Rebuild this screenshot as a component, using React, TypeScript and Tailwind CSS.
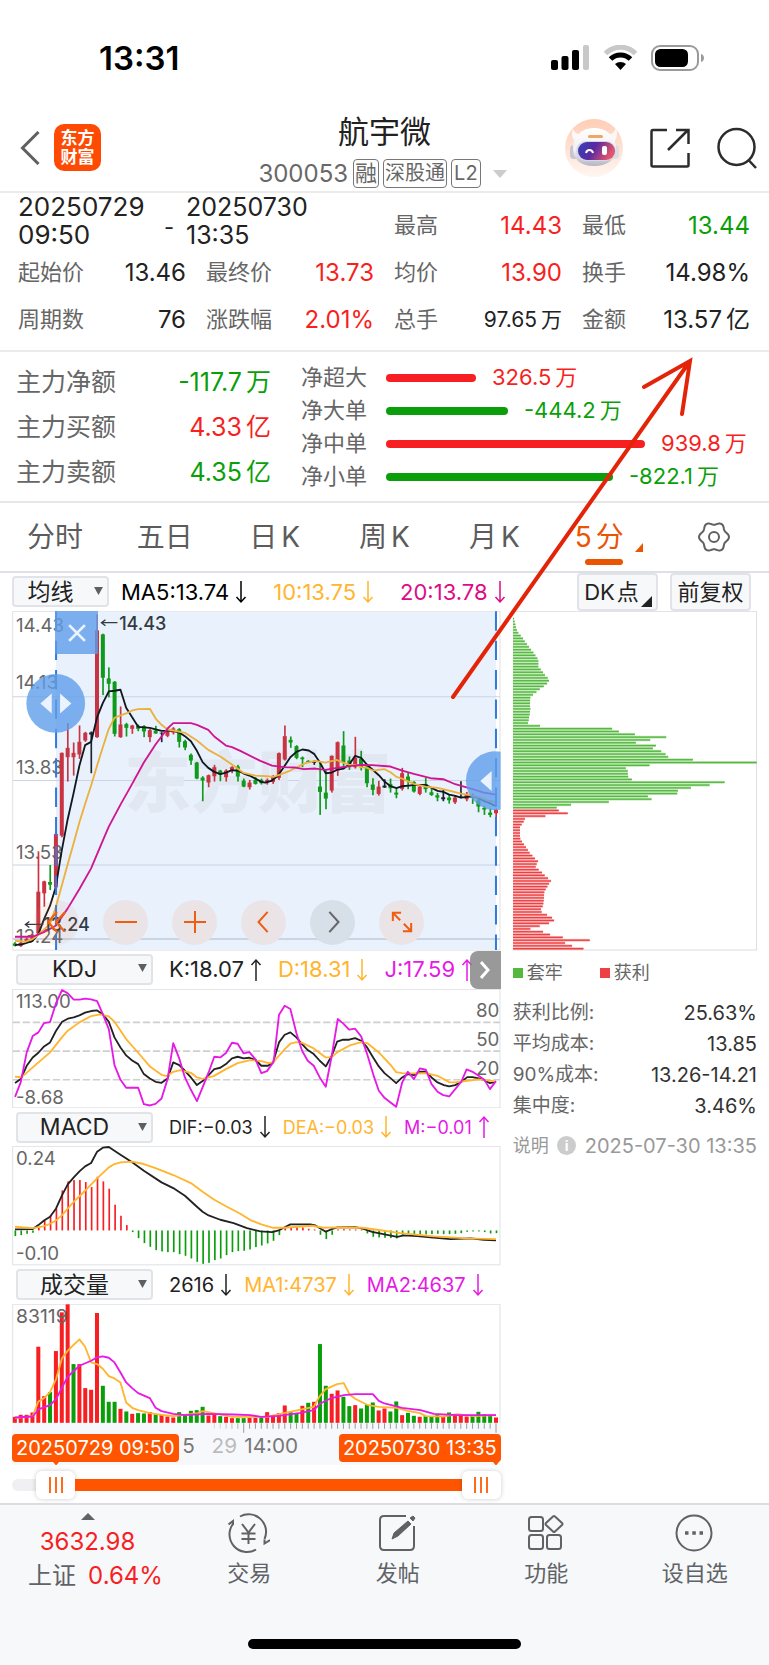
import React, { useState } from 'react';

const UP = '#f71f22';
const DOWN = '#0a9f0a';
const STEP = 17.58;
const xAt = (i: number) => 44.5 + STEP * i;

type Candle = [kind: string, high: number, top: number, bottom: number, low: number];

const candles: Candle[] = [
  ['g', 1114, 1118, 1125, 1127], ['r', 1111, 1116, 1126, 1128], ['r', 1100, 1104, 1112, 1116], ['r', 1090, 1094, 1106, 1110],
  ['r', 842, 963, 1088, 1092], ['r', 930, 932, 968, 1008], ['g', 883, 934, 942, 958], ['r', 788, 790, 950, 955],
  ['r', 546, 547, 795, 800], ['r', 458, 532, 560, 633], ['r', 516, 547, 560, 615], ['r', 465, 514, 552, 565],
  ['r', 484, 487, 510, 514], ['k', 483, 486, 492, 608], ['r', 132, 180, 500, 502], ['g', 190, 192, 322, 374],
  ['g', 291, 324, 340, 381], ['g', 332, 334, 490, 498], ['r', 408, 462, 500, 502], ['g', 457, 461, 472, 498],
  ['r', 463, 465, 475, 490], ['g', 462, 466, 475, 482], ['g', 464, 467, 483, 500], ['r', 475, 479, 500, 515],
  ['g', 466, 480, 489, 490], ['k', 485, 487, 489, 515], ['r', 474, 484, 496, 500], ['r', 470, 474, 486, 492],
  ['g', 473, 476, 514, 531], ['g', 508, 512, 531, 539], ['g', 549, 553, 570, 583], ['g', 574, 576, 624, 626],
  ['g', 617, 621, 630, 692], ['r', 612, 614, 636, 650], ['r', 583, 590, 617, 633], ['g', 598, 600, 612, 632],
  ['r', 596, 600, 620, 633], ['r', 587, 590, 600, 608], ['g', 583, 588, 618, 633], ['g', 624, 630, 648, 650],
  ['r', 628, 636, 650, 657], ['g', 620, 628, 640, 642], ['g', 624, 628, 638, 642], ['r', 624, 628, 636, 642],
  ['r', 614, 620, 634, 640], ['r', 546, 548, 622, 628], ['r', 465, 497, 567, 570], ['g', 498, 508, 516, 532],
  ['g', 524, 527, 562, 566], ['g', 558, 561, 566, 590], ['g', 569, 571, 575, 577], ['k', 570, 573, 577, 583],
  ['g', 574, 648, 664, 733], ['g', 600, 666, 684, 716], ['r', 555, 556, 660, 666], ['r', 513, 515, 600, 616],
  ['g', 482, 525, 575, 590], ['g', 558, 570, 590, 598], ['r', 499, 562, 590, 594], ['g', 541, 565, 590, 600],
  ['g', 580, 588, 638, 650], ['g', 623, 642, 658, 674], ['r', 631, 648, 670, 675], ['k', 626, 645, 651, 652],
  ['g', 624, 640, 653, 666], ['g', 655, 666, 672, 683], ['r', 592, 608, 655, 660], ['g', 606, 618, 632, 656],
  ['g', 632, 634, 663, 666], ['r', 642, 648, 670, 674], ['g', 622, 640, 656, 666], ['g', 655, 665, 673, 676],
  ['g', 667, 674, 681, 692], ['k', 657, 680, 686, 692], ['g', 672, 681, 689, 699], ['r', 676, 681, 695, 700],
  ['k', 632, 678, 682, 683], ['r', 664, 670, 686, 692], ['g', 669, 676, 681, 700], ['g', 680, 690, 708, 725],
  ['g', 706, 712, 717, 733], ['g', 714, 726, 733, 740], ['r', 714, 717, 728, 740],
];

const ma5 =
  '45,1123 68,1120 98,1110 115,1090 132,1045 150,1005 167,950 185,840 203,745 220,670 238,585 255,524 273,514 291,440 308,398 326,363 343,361 361,358 378,412 396,440 414,469 449,472 484,481 519,481 537,486 554,497 572,512 590,541 607,575 624,592 642,604 660,611 677,606 695,599 712,600 730,609 747,615 765,624 783,634 795,636 815,630 833,615 850,590 870,560 888,544 906,537 925,540 941,550 958,575 976,608 994,606 1012,597 1030,594 1048,580 1064,556 1082,562 1100,583 1135,614 1152,633 1170,647 1188,653 1205,647 1225,645 1245,643 1275,643 1293,652 1311,661 1328,664 1346,672 1364,676 1381,681 1400,679 1416,677 1434,683 1452,692 1468,698 1486,707';
const ma10 =
  '45,1110 75,1113 98,1105 115,1092 150,1060 167,1010 185,945 203,880 220,820 238,755 255,700 273,645 291,585 308,530 326,475 343,442 361,435 378,429 396,420 414,416 449,415 467,445 484,463 502,477 519,480 554,487 590,510 624,538 660,558 695,582 730,607 765,615 800,617 820,619 845,610 870,600 888,591 915,578 945,571 975,576 1008,568 1030,577 1048,583 1064,583 1082,590 1100,592 1117,600 1152,596 1170,605 1188,619 1205,624 1240,640 1275,648 1311,652 1346,660 1381,669 1400,672 1434,680 1460,690 1486,694';
const ma20 =
  '45,1098 98,1098 130,1085 167,1065 203,1013 238,955 273,893 308,810 326,768 361,702 396,640 431,576 466,522 502,474 519,458 572,458 590,463 624,478 642,498 677,525 695,530 720,541 780,571 815,585 850,590 885,591 910,596 945,594 975,598 1010,592 1048,587 1080,583 1115,584 1170,588 1205,600 1240,610 1290,623 1328,626 1364,641 1416,656 1450,666 1486,672';

const kLine =
  '45,412 62,400 80,360 98,335 115,321 132,302 150,290 168,255 186,228 203,219 221,215 238,209 255,201 273,196 290,194 308,206 326,228 343,275 361,305 378,329 396,344 414,355 431,385 449,398 466,408 484,411 502,398 519,350 537,358 554,375 572,395 590,418 607,406 625,388 642,370 660,366 677,355 695,338 712,333 730,338 747,336 765,342 783,360 803,360 818,350 836,290 853,267 870,260 888,275 905,295 922,313 940,325 958,345 976,362 994,330 1010,288 1028,282 1046,282 1064,277 1082,285 1100,305 1118,335 1135,362 1152,382 1170,397 1187,412 1205,395 1222,385 1240,388 1258,378 1276,378 1293,395 1311,410 1330,418 1346,422 1364,418 1382,408 1400,394 1416,394 1434,398 1452,404 1468,412 1486,408';
const dLine =
  '45,393 65,394 98,365 150,320 186,274 203,255 238,230 273,211 300,206 326,212 343,228 378,280 414,321 449,362 484,387 500,391 519,378 540,373 572,381 590,395 607,399 640,391 677,370 712,352 750,343 783,346 805,352 818,350 836,330 853,310 870,294 888,289 905,291 940,308 976,335 994,334 1010,320 1046,300 1082,289 1100,292 1135,320 1170,357 1187,379 1205,382 1240,383 1276,382 1311,390 1346,409 1364,410 1400,405 1434,401 1486,407';
const jLine =
  '45,453 62,410 80,320 98,271 115,260 132,232 150,229 168,172 186,133 203,143 221,162 238,162 255,159 273,161 291,166 308,205 326,250 343,358 361,402 378,426 414,426 431,475 449,479 466,474 484,458 502,400 519,292 537,338 554,395 572,432 590,466 607,425 625,380 642,333 660,335 677,322 695,291 712,294 730,323 747,319 765,340 783,382 800,376 820,348 836,207 853,180 870,190 888,262 905,315 922,345 940,360 958,395 976,423 994,330 1012,220 1028,233 1046,252 1064,249 1082,272 1100,325 1118,385 1135,435 1152,456 1170,470 1187,483 1205,410 1222,378 1240,400 1258,368 1276,372 1293,415 1311,438 1328,448 1346,452 1364,430 1382,408 1398,371 1416,378 1434,390 1452,403 1468,430 1486,406';

const macdBars = [
  873, 870, 866, 863, 848, 826, 812, 790, 736, 709, 705, 705, 711, 726, 695, 709, 731, 779, 812, 840, 861, 879, 894, 905, 915, 919, 921, 921,
  927, 932, 940, 950, 956, 953, 945, 940, 930, 921, 918, 917, 913, 906, 901, 895, 887, 870, 849, 848, 846, 847, 851, 853, 869, 882, 869, 853,
  852, 853, 853, 853, 865, 875, 877, 878, 879, 880, 872, 866, 867, 868, 868, 867, 866, 867, 867, 866, 864, 860, 859, 859, 861, 865, 864,
];
const dif =
  '45,853 98,852 115,840 132,826 150,815 168,790 186,750 203,718 221,697 238,679 255,664 273,654 291,620 308,608 326,606 361,629 396,652 431,677 484,712 519,729 554,752 590,785 607,800 625,811 660,824 700,834 740,849 780,859 815,861 835,856 850,848 870,838 930,838 945,841 976,860 994,852 1010,847 1064,846 1085,850 1115,860 1190,875 1210,871 1250,873 1290,877 1350,882 1410,880 1450,884 1486,886';
const dea =
  '45,845 98,849 130,844 150,836 168,826 186,810 221,770 255,737 291,700 326,667 343,657 361,652 396,650 431,657 466,669 519,690 572,714 607,740 642,764 680,785 720,806 750,825 783,838 818,848 850,848 935,842 970,848 1010,847 1085,848 1130,854 1200,864 1300,874 1400,880 1486,882';

const volumes =
  'r438 r432 r432 r425 r228 r376 g364 r241 r125 r101 g280 r280 r352 r357 r127 g345 g393 g393 r414 g422 r429 g427 g428 r424 g431 r432 r437 r440 g424 g434 g420 g418 g408 r434 r430 g436 r438 r442 g442 g442 r441 r441 g440 r424 r436 r427 r404 g424 g428 r405 g396 r393 g220 g345 r369 r359 g378 g406 r403 g413 g402 g395 r419 r413 g422 g392 r433 g426 g435 r438 g436 g438 g430 r437 g425 r430 r434 r437 g434 g423 g430 g432 r440'.split(' ');
const volMa1 =
  '45,442 98,436 115,392 132,382 150,364 168,325 186,262 203,240 221,222 238,206 255,228 273,275 291,280 308,294 326,316 343,323 361,335 378,395 396,411 414,418 449,427 484,432 519,436 590,428 607,421 640,427 695,438 750,438 800,438 850,427 940,408 958,376 976,355 1010,340 1030,337 1048,372 1064,384 1100,402 1135,408 1187,411 1222,420 1258,427 1276,436 1328,437 1370,430 1420,436 1486,433';
const volMa2 =
  '45,440 98,437 115,416 150,403 168,385 186,350 203,318 238,285 273,270 291,260 308,257 326,261 343,275 361,305 378,335 396,352 414,367 449,382 466,411 484,421 519,429 554,433 620,429 700,431 750,433 783,438 835,435 900,426 940,418 960,398 990,383 1030,373 1065,370 1117,370 1135,390 1152,398 1205,411 1260,418 1300,429 1370,433 1486,433';

// right edge of every chip bar, top to bottom
const chips = [
  39, 41, 43, 45, 48, 52, 59, 66, 71, 78, 84, 90, 97, 103, 109, 112, 112, 112, 119, 126, 132, 140, 144, 138, 128, 116, 106, 96, 88, 87, 87, 87,
  88, 87, 86, 84, 83, 81, 117, 333, 353, 401, 495, 447, 404, 464, 455, 480, 493, 501, 575, 766, 445, 374, 380, 380, 381, 392, 670, 625, 569,
  530, 528, 440, 451, 323, 210, 167, 173, 200, 133, 72, 68, 62, 57, 57, 57, 57, 58, 63, 69, 75, 81, 86, 94, 102, 111, 107, 104, 113, 123, 131,
  141, 150, 144, 139, 134, 130, 129, 129, 128, 127, 125, 120, 122, 138, 153, 159, 144, 116, 88, 126, 147, 185, 266, 192, 213, 247,
];
const GREEN_CHIPS = 68;

// six soft lobes, one pointing right
const gear = Array.from({ length: 72 }, (_, i) => {
  const a = (i / 72) * Math.PI * 2;
  const r = 13.6 + 1.4 * Math.cos(6 * a);
  return `${(16 + r * Math.cos(a)).toFixed(2)},${(16 + r * Math.sin(a)).toFixed(2)}`;
}).join(' ');

const Line: React.FC<{ points: string; color: string }> = ({ points, color }) => (
  <polyline points={points} fill="none" stroke={color} strokeWidth="5.5" strokeLinejoin="round" />
);

const Arrow: React.FC<{ up?: boolean }> = ({ up }) => (
  <svg viewBox="0 0 12 24" className="ml-1.5 h-6 w-3 shrink-0" fill="none" stroke="currentColor" strokeWidth="1.5">
    {up ? <path d="M6 23V2M1.500 7L6 2l4.500 5" /> : <path d="M6 1v21M1.500 17L6 22l4.500-5" />}
  </svg>
);

const Reading: React.FC<{ text: string; color: string; up?: boolean }> = ({ text, color, up }) => (
  <span className={`flex items-center whitespace-nowrap ${color}`}>
    {text}
    <Arrow up={up} />
  </span>
);

const Picker: React.FC<{ label: string; options: string[]; size: string }> = ({ label, options, size }) => (
  <div className={`relative shrink-0 ${size}`}>
    <select
      aria-label={label}
      className="h-[31px] w-full appearance-none rounded border-2 border-[#e1e3e8] bg-[#f7f8fa] pr-5 text-center [text-align-last:center] text-[23px] leading-6 text-[#222]"
    >
      {options.map((o) => (
        <option key={o}>{o}</option>
      ))}
    </select>
    <svg viewBox="0 0 10 9" className="pointer-events-none absolute right-1.5 top-[11px] h-2 w-[9px]">
      <path d="M0 0h10L5 9z" fill="#5f5f5f" />
    </svg>
  </div>
);

// "97.65万" is set with a little air before the unit
const Amount: React.FC<{ value: string }> = ({ value }) => {
  const unit = value.slice(-1);
  if (unit !== '万' && unit !== '亿') return <>{value}</>;
  return (
    <>
      {value.slice(0, -1)}
      <span className="ml-1">{unit}</span>
    </>
  );
};

function StatusBar() {
  return (
    <div className="flex h-[115px] items-center justify-between pl-[99px] pr-16">
      <span className="text-[33px] font-semibold leading-10 text-black">13:31</span>
      <svg viewBox="0 0 154 26" className="h-[26px] w-[154px]">
        <g>
          <rect x="0" y="15" width="7" height="10" rx="2" />
          <rect x="10.500" y="11" width="7" height="14" rx="2" />
          <rect x="21" y="5" width="7" height="20" rx="2" />
          <rect x="32" y="0" width="6" height="25" rx="2" fill="#c8c8c8" />
        </g>
        <g fill="none">
          <path d="M54.500 8.500C63 0 76 0 84.500 8.500" stroke="#c8c8c8" strokeWidth="5" />
          <path d="M59.500 14C65 8.500 74 8.500 79.500 14" stroke="#000" strokeWidth="5" />
        </g>
        <path d="M64 19c3-2.800 8-2.800 11 0l-5.500 6z" />
        <rect x="101" y="1" width="46" height="24" rx="8" fill="none" stroke="#9b9b9b" strokeWidth="2" />
        <rect x="104" y="4" width="33" height="18" rx="5.500" />
        <path d="M150 9c4 1 4 7 0 8z" fill="#9b9b9b" />
      </svg>
    </div>
  );
}

function Header() {
  return (
    <header className="grid h-[78px] grid-cols-[1fr_250px_1fr] items-start border-b-2 border-[#ebebeb] px-3">
      <div className="flex items-center pl-2 pt-[9px]">
        <button aria-label="返回" className="mr-3.5">
          <svg viewBox="0 0 20 34" className="h-[34px] w-5" fill="none" stroke="#606060" strokeWidth="3">
            <path d="M18.500 1L2.500 17l16 16" />
          </svg>
        </button>
        <a href="#home" className="flex size-[47px] flex-col items-center justify-center rounded-[10px] bg-[#ff4a03] text-[17px] font-bold leading-[19px] text-white">
          <span>东方</span>
          <span>财富</span>
        </a>
      </div>
      <div className="flex flex-col items-center whitespace-nowrap pt-px">
        <h1 className="text-[31px] leading-8 text-[#222]">航宇微</h1>
        <div className="mt-[11px] flex items-center gap-1 pr-1 text-[22px] leading-6 text-[#686868]">
          <span className="mr-px text-[24px]">300053</span>
          <span className="rounded border border-[#777] px-px leading-[27px]">融</span>
          <span className="rounded border border-[#777] px-px text-[20px] leading-[27px]">深股通</span>
          <span className="rounded border border-[#777] px-0.5 text-[20px] leading-[27px]">L2</span>
          <svg viewBox="0 0 14 8" className="ml-2 h-2 w-3.5">
            <path d="M0 0h14L7 8z" fill="#ccc" />
          </svg>
        </div>
      </div>
      <div className="flex items-center justify-end gap-[27px] pt-1">
        <button aria-label="智能助手">
          <svg viewBox="0 0 58 58" className="size-[58px]">
            <defs>
              <linearGradient id="halo" x1="0" y1="0" x2="0" y2="1">
                <stop offset="0" stopColor="#ffcdb5" />
                <stop offset="1" stopColor="#fff6f1" />
              </linearGradient>
              <linearGradient id="visor" x1="0" y1="0" x2="1" y2="0.3">
                <stop offset="0" stopColor="#3043b8" />
                <stop offset="0.5" stopColor="#5b2aa0" />
                <stop offset="1" stopColor="#e2556f" />
              </linearGradient>
              <linearGradient id="shell" x1="0" y1="0" x2="0" y2="1">
                <stop offset="0" stopColor="#ffffff" />
                <stop offset="0.6" stopColor="#f0eef3" />
                <stop offset="1" stopColor="#b4b5c4" />
              </linearGradient>
            </defs>
            <circle cx="29" cy="29" r="29" fill="url(#halo)" />
            <path d="M8 10c-2 5-1 10 3 13l7-7c-5 0-8-2-10-6zM51 9c2 5 1 10-2 14l-8-7c5 0 8-2 10-7z" fill="#fbf8f9" />
            <rect x="5" y="26" width="9" height="14" rx="4" fill="#c6c5d0" />
            <rect x="46" y="26" width="8" height="14" rx="4" fill="#dcdce3" />
            <path d="M29 9c13 0 22 9 22 21 0 10-8 17-22 17S8 40 8 30C8 18 16 9 29 9z" fill="url(#shell)" />
            <rect x="23" y="16" width="15" height="3" rx="1.500" fill="#f0a565" />
            <rect x="11" y="22" width="40" height="20" rx="10" fill="#d9d6e4" />
            <rect x="13" y="23" width="37" height="18" rx="9" fill="url(#visor)" />
            <path d="M21 34c1-4 6-4 7 0" fill="none" stroke="#fff" strokeWidth="2" />
            <rect x="37" y="27" width="5" height="9" rx="2" fill="#fff" />
          </svg>
        </button>
        <button aria-label="分享">
          <svg viewBox="0 0 40 40" className="size-10" fill="none" stroke="#2c2c2c" strokeWidth="2.500">
            <path d="M17 2H3Q1.500 2 1.500 4v33q0 1.500 1.500 1.500h34q1.500 0 1.500-1.500V25M18 22L38 2M26 2h12.500v14" />
          </svg>
        </button>
        <button aria-label="搜索">
          <svg viewBox="0 0 40 42" className="h-[42px] w-10" fill="none" stroke="#2c2c2c" strokeWidth="2.500">
            <circle cx="19.500" cy="20" r="18" />
            <path d="M31.500 33l7.500 8" />
          </svg>
        </button>
      </div>
    </header>
  );
}

const Stat: React.FC<{ label: string; value: string; color?: string; small?: boolean }> = ({ label, value, color = 'text-[#222]', small }) => (
  <div className="flex h-[47px] items-center justify-between whitespace-nowrap">
    <span className="text-[22px] text-[#666]">{label}</span>
    <span className={`${small ? 'text-[21px]' : 'text-[24px]'} ${color}`}>
      <Amount value={value} />
    </span>
  </div>
);

function Summary() {
  return (
    <section className="grid grid-cols-4 gap-x-5 border-b-2 border-[#ebebeb] pb-[7px] pl-[18px] pr-[19px] pt-[9px]">
      <div className="col-span-2 flex h-[47px] items-end text-[#222]">
        <span className="w-[146px] text-[26px] leading-7">20250729 09:50</span>
        <span className="mb-2 w-[22px] text-[22px] leading-7">-</span>
        <span className="w-[140px] text-[25px] leading-7">20250730 13:35</span>
      </div>
      <Stat label="最高" value="14.43" color="text-[#f71f22]" />
      <Stat label="最低" value="13.44" color="text-[#0a9f0a]" />
      <Stat label="起始价" value="13.46" />
      <Stat label="最终价" value="13.73" color="text-[#f71f22]" />
      <Stat label="均价" value="13.90" color="text-[#f71f22]" />
      <Stat label="换手" value="14.98%" />
      <Stat label="周期数" value="76" />
      <Stat label="涨跌幅" value="2.01%" color="text-[#f71f22]" />
      <Stat label="总手" value="97.65万" small />
      <Stat label="金额" value="13.57亿" />
    </section>
  );
}

const flows = [
  { label: '净超大', value: '326.5万', width: 90, up: true },
  { label: '净大单', value: '-444.2万', width: 122, up: false },
  { label: '净中单', value: '939.8万', width: 259, up: true },
  { label: '净小单', value: '-822.1万', width: 227, up: false },
];

function MoneyFlow() {
  const totals = [
    { label: '主力净额', value: '-117.7万', color: 'text-[#0a9f0a]' },
    { label: '主力买额', value: '4.33亿', color: 'text-[#f71f22]' },
    { label: '主力卖额', value: '4.35亿', color: 'text-[#0a9f0a]' },
  ];
  return (
    <section className="flex border-b-2 border-[#e6e6e6] pb-1.5 pl-4 pt-2">
      <div className="w-[255px]">
        {totals.map((t) => (
          <div key={t.label} className="flex h-[45px] items-center justify-between text-[25px]">
            <span className="text-[#666]">{t.label}</span>
            <span className={t.color}>
              <Amount value={t.value} />
            </span>
          </div>
        ))}
      </div>
      <div className="flex-1 pl-[30px] pt-px">
        {flows.map((f) => (
          <div key={f.label} className="flex h-[33px] items-center whitespace-nowrap text-[22px]">
            <span className="w-[85px] text-[#666]">{f.label}</span>
            <span className={`h-2 rounded ${f.up ? 'bg-[#f71f22]' : 'bg-[#0a9f0a]'}`} style={{ width: f.width }} />
            <span className={`ml-4 ${f.up ? 'text-[#f71f22]' : 'text-[#0a9f0a]'}`}>
              <Amount value={f.value} />
            </span>
          </div>
        ))}
      </div>
    </section>
  );
}

const periods = [
  ['分', '时'],
  ['五', '日'],
  ['日', 'K'],
  ['周', 'K'],
  ['月', 'K'],
  ['5', '分'],
];

function Tabs() {
  const [active, setActive] = useState('5分');
  return (
    <nav className="flex h-[70px] border-b-2 border-[#dfe0e6]">
      {periods.map(([head, tail]) => {
        const name = head + tail;
        const mixed = tail === 'K' || head === '5';
        return (
          <button
            key={name}
            onClick={() => setActive(name)}
            className={`relative flex flex-1 items-center justify-center text-[28px] ${active === name ? 'text-[#ea5504]' : 'text-[#5c5c5c]'}`}
          >
            <span className={name === '5分' ? 'mr-2.5' : ''}>
              {head}
              <span className={mixed ? 'ml-1' : ''}>{tail}</span>
            </span>
            {name === '5分' && (
              <svg viewBox="0 0 8 9" className="absolute right-4 top-10 h-[9px] w-2">
                <path d="M8 0v9H0z" fill="#ea5504" />
              </svg>
            )}
            {active === name && <span className="absolute bottom-1.5 left-9 h-1.5 w-[38px] rounded-full bg-[#ea5504]" />}
          </button>
        );
      })}
      <button aria-label="设置" className="flex flex-1 items-center justify-center">
        <svg viewBox="0 0 32 32" className="size-8" fill="none" stroke="#606060" strokeWidth="2">
          <polygon points={gear} strokeLinejoin="round" />
          <circle cx="16" cy="16" r="5" />
        </svg>
      </button>
    </nav>
  );
}

const candleColor: Record<string, string> = { r: '#c93442', g: '#109a1c', k: '#1c2630' };

function PriceChart() {
  return (
    <div className="relative">
      <svg viewBox="36 122 1464 1018" className="block w-full">
        <rect x="38" y="123" width="1460" height="1015" fill="#fff" stroke="#dfe1e7" strokeWidth="3" />
        <rect x="168" y="124" width="1318" height="1013" fill="#e9f1fc" />
        {[379, 630, 883, 1105].map((y) => (
          <path key={y} d={`M38 ${y}H1498`} stroke="#cad4e4" strokeWidth={y > 1000 ? 6 : 3} />
        ))}
        <text x="372" y="708" fontSize="200" fontWeight="900" fill="#e1e8f2">东方财富</text>
        <g fontSize="56" fill="#666">
          <text x="48" y="185">14.43</text>
          <text x="48" y="357">14.13</text>
          <text x="48" y="611">13.83</text>
          <text x="48" y="865">13.53</text>
          <text x="48" y="1118">13.24</text>
        </g>
        {candles.map(([kind, high, top, bottom, low], i) => (
          <g key={i} fill={candleColor[kind]}>
            <rect x={xAt(i) - 2} y={high} width="5" height={low - high} />
            <rect x={xAt(i) - 6} y={top} width="12" height={bottom - top} />
          </g>
        ))}
        <Line points={ma5} color="#111820" />
        <Line points={ma10} color="#ecb03c" />
        <Line points={ma20} color="#cf1591" />
        <g fontSize="54" fill="#333a44" fontWeight="500">
          <text x="357" y="178">14.43</text>
          <text x="130" y="1081">13.24</text>
        </g>
        <g fill="none" stroke="#333a44" strokeWidth="4">
          <path d="M352 157H304M316 148l-12 9 12 9" />
          <path d="M130 1061H76M88 1052l-12 9 12 9" />
        </g>
        <path d="M168 123V1138M1486 123V1138" stroke="#2f7bdf" strokeWidth="6" strokeDasharray="58 30" />
        <g fill="#5f9dea" fillOpacity="0.8">
          <circle cx="167" cy="399" r="88" />
          <path d="M1500 544a88 88 0 1 0 0 173z" />
        </g>
        <path d="M155 369v60l-34-30zM180 369v60l34-30zM1473 601v60l-34-30z" fill="#eaf3ff" />
      </svg>
      <button aria-label="关闭区间统计" className="absolute left-[43px] top-0 flex size-[43px] items-center justify-center bg-[#5f9dea]/80">
        <svg viewBox="0 0 16 16" className="size-[18px]" stroke="#eaf3ff" strokeWidth="2.500">
          <path d="M1 1l14 14M15 1L1 15" />
        </svg>
      </button>
      <div className="absolute bottom-1.5 left-[22px] flex gap-6">
        <button aria-label="最早" className="flex size-[45px] items-center justify-center rounded-full bg-[#f08a5a]/10">
          <svg viewBox="0 0 20 20" className="size-5" fill="none" stroke="#f0600f" strokeWidth="2.200">
            <path d="M10 0L1 10l9 10M18 0L9 10l9 10" />
          </svg>
        </button>
        {[
          { name: '缩小', path: 'M0 12h24' },
          { name: '放大', path: 'M0 12h24M12 0v24' },
          { name: '左移', path: 'M16 1L6 12l10 11' },
          { name: '右移', path: 'M8 1l10 11L8 23' },
          { name: '全屏', path: 'M2 11V2h9M2 2l8 8M13 22h9v-9M22 22l-8-8' },
        ].map((b) => (
          <button
            key={b.name}
            aria-label={b.name}
            className={`flex size-[45px] items-center justify-center rounded-full ${b.name === '右移' ? 'bg-[#d7dfe8]' : 'bg-[#eae4e6]'}`}
          >
            <svg viewBox="0 0 24 24" className="size-[22px]" fill="none" stroke={b.name === '右移' ? '#666' : '#ee5d12'} strokeWidth="2.200">
              <path d={b.path} />
            </svg>
          </button>
        ))}
      </div>
    </div>
  );
}

function KdjChart() {
  return (
    <svg viewBox="36 130 1464 358" className="block w-full">
      <rect x="38" y="131" width="1460" height="355" fill="#fff" stroke="#dfe1e7" strokeWidth="3" />
      <path d="M38 230H1498M38 316H1498M38 402H1498" stroke="#cfcfcf" strokeWidth="5" strokeDasharray="22 8" />
      <g fontSize="56" fill="#666">
        <text x="48" y="188">113.00</text>
        <text x="48" y="474">-8.68</text>
        <text x="1496" y="215" textAnchor="end">80</text>
        <text x="1496" y="302" textAnchor="end">50</text>
        <text x="1496" y="388" textAnchor="end">20</text>
      </g>
      <Line points={kLine} color="#222" />
      <Line points={dLine} color="#ffb52e" />
      <Line points={jLine} color="#e619e6" />
    </svg>
  );
}

function MacdChart() {
  return (
    <svg viewBox="36 603 1464 358" className="block w-full">
      <rect x="38" y="604" width="1460" height="355" fill="#fff" stroke="#dfe1e7" strokeWidth="3" />
      <g fontSize="56" fill="#666">
        <text x="48" y="659">0.24</text>
        <text x="48" y="945">-0.10</text>
      </g>
      {macdBars.map((y, i) => (
        <rect key={i} x={xAt(i) - 1} y={Math.min(y, 856)} width="5" height={Math.abs(856 - y)} fill={y < 856 ? UP : DOWN} />
      ))}
      <Line points={dif} color="#222" />
      <Line points={dea} color="#ffb52e" />
    </svg>
  );
}

function VolumeChart() {
  return (
    <div className="relative">
      <svg viewBox="36 100 1464 484" className="block w-full">
        <rect x="36" y="456" width="1464" height="128" fill="#f7f8fb" />
        <path d="M38 456V101H1498V456" fill="#fff" stroke="#dfe1e7" strokeWidth="3" />
        {volumes.map((v, i) => {
          const y = Number(v.slice(1));
          return <rect key={i} x={xAt(i) - 6} y={y} width="12" height={456 - y} fill={v[0] === 'r' ? UP : DOWN} />;
        })}
        <text x="48" y="157" fontSize="58" fill="#666">83119</text>
        <Line points={volMa1} color="#ffb52e" />
        <Line points={volMa2} color="#e619e6" />
        {volumes.map((_, i) =>
          i < 34 ? null : (
            <path
              key={i}
              d={`M${xAt(i)} 457v${i === 39 || i === 82 ? 29 : 17}`}
              stroke="#999"
              strokeWidth="3"
              opacity={i < 39 ? 0.3 + (i - 34) * 0.1 : 1}
            />
          )
        )}
        <g fontSize="62" fill="#777">
          <text x="546" y="547">5</text>
          <text x="634" y="547" fill="#bbb">29</text>
          <text x="732" y="547">14:00</text>
        </g>
        <path d="M155 568h26l-13 16zM1473 568h26l-13 16z" fill="#ff5500" />
      </svg>
      <span className="absolute bottom-[3px] left-0 rounded bg-[#ff5500] px-1 text-[20px] leading-7 text-white">20250729 09:50</span>
      <span className="absolute bottom-[3px] right-0 rounded bg-[#ff5500] px-1 text-[20px] leading-7 text-white">20250730 13:35</span>
    </div>
  );
}

const Grip = () => (
  <span className="flex h-7 w-[39px] items-center justify-center gap-1 rounded-md bg-white shadow-[0_0_5px_rgba(0,0,0,0.2)]">
    <i className="h-4 w-0.5 bg-[#ff6a1f]" />
    <i className="h-4 w-0.5 bg-[#ff6a1f]" />
    <i className="h-4 w-0.5 bg-[#ff6a1f]" />
  </span>
);

function RangeBar() {
  return (
    <div className="relative mb-1 mt-1.5 flex h-7 items-center">
      <span className="h-3 w-6 rounded-l-full bg-[#f0f0f2]" />
      <Grip />
      <span className="h-3 flex-1 bg-[#ff5500]" />
      <Grip />
      <input type="range" aria-label="区间起点" min="0" max="82" defaultValue="7" className="absolute left-0 w-1/2 opacity-0" />
      <input type="range" aria-label="区间终点" min="0" max="82" defaultValue="82" className="absolute right-0 w-1/2 opacity-0" />
    </div>
  );
}

function ChipPanel() {
  const rows = [
    ['获利比例:', '25.63%'],
    ['平均成本:', '13.85'],
    ['90%成本:', '13.26-14.21'],
    ['集中度:', '3.46%'],
  ];
  return (
    <aside>
      <svg viewBox="36 122 732 1018" className="block w-full">
        <path d="M36 123H766V1138H36" fill="none" stroke="#d9dbe2" strokeWidth="3" />
        {chips.map((x, i) => (
          <g key={i} fill={i < GREEN_CHIPS ? '#54b93f' : '#ee4043'}>
            <rect x="36" y={141 + i * 8.45} width={x - 36} height="8" opacity="0.4" />
            <rect x="36" y={143 + i * 8.45} width={x - 36} height="4" />
          </g>
        ))}
      </svg>
      <div className="mt-2 flex items-center gap-[37px] text-[18px] leading-7 text-[#666]">
        <span className="flex items-center gap-1"><i className="size-2.5 bg-[#54b93f]" />套牢</span>
        <span className="flex items-center gap-1"><i className="size-2.5 bg-[#ee4043]" />获利</span>
      </div>
      <dl className="mt-[11px] text-[19px]">
        {rows.map(([label, value]) => (
          <div key={label} className="flex h-[31px] items-center justify-between">
            <dt className="text-[#666]">{label}</dt>
            <dd className="text-[20px] text-[#333]">{value}</dd>
          </div>
        ))}
      </dl>
      <div className="mt-2 flex h-8 items-center justify-between whitespace-nowrap text-[18px] text-[#999]">
        <span>说明</span>
        <button aria-label="说明" className="flex size-[19px] items-center justify-center rounded-full bg-[#ccc] text-sm font-bold leading-none text-white">i</button>
        <span className="text-[20px]">2025-07-30 13:35</span>
      </div>
    </aside>
  );
}

function Charts() {
  return (
    <main className="px-3">
      <div className="flex h-[38px] items-center pr-1.5 text-[22px]">
        <Picker label="主图指标" options={['均线', 'BOLL']} size="w-[97px]" />
        <div className="ml-3 flex gap-[26px]">
          <Reading text="MA5:13.74" color="text-black" />
          <Reading text="10:13.75" color="text-[#ffb52e]" />
          <Reading text="20:13.78" color="text-[#dd0b88]" />
        </div>
        <button className="relative ml-auto h-[38px] w-[81px] rounded border-2 border-[#e1e3e8] bg-[#f7f8fa] pr-3 text-[22px] whitespace-nowrap text-[#222]">
          DK<span className="ml-0.5">点</span>
          <svg viewBox="0 0 11 11" className="absolute bottom-0.5 right-1 size-[11px]">
            <path d="M11 0v11H0z" fill="#222" />
          </svg>
        </button>
        <button className="ml-3 h-[38px] w-[81px] rounded border-2 border-[#e1e3e8] bg-[#f7f8fa] text-[22px] whitespace-nowrap text-[#222]">前复权</button>
      </div>
      <div className="grid grid-cols-[2fr_1fr] gap-3">
        <div>
          <PriceChart />
          <div className="relative flex h-[38px] items-center gap-4 pl-1 text-[22px]">
            <Picker label="副图一指标" options={['KDJ', 'RSI']} size="w-[137px]" />
            <Reading text="K:18.07" color="text-[#222]" up />
            <Reading text="D:18.31" color="text-[#ffb52e]" />
            <Reading text="J:17.59" color="text-[#e619e6]" up />
            <button aria-label="展开" className="absolute right-0 top-0 flex h-full w-[31px] items-center justify-center rounded-l-lg bg-[#808080]/80">
              <svg viewBox="0 0 10 18" className="h-[18px] w-2.5" fill="none" stroke="#fff" strokeWidth="3">
                <path d="M1 1l7 8-7 8" />
              </svg>
            </button>
          </div>
          <KdjChart />
          <div className="flex h-[38px] items-center pl-1 text-[18px]">
            <Picker label="副图二指标" options={['MACD', 'BIAS']} size="w-[137px]" />
            <div className="ml-4 flex gap-3">
              <Reading text="DIF:−0.03" color="text-[#222]" />
              <Reading text="DEA:−0.03" color="text-[#ffb52e]" />
              <Reading text="M:−0.01" color="text-[#e619e6]" up />
            </div>
          </div>
          <MacdChart />
          <div className="flex h-[38px] items-center pl-1 text-[20px]">
            <Picker label="副图三指标" options={['成交量', '成交额']} size="w-[137px]" />
            <div className="ml-4 flex gap-3">
              <Reading text="2616" color="text-[#222]" />
              <Reading text="MA1:4737" color="text-[#ffb52e]" />
              <Reading text="MA2:4637" color="text-[#e619e6]" />
            </div>
          </div>
          <VolumeChart />
          <RangeBar />
        </div>
        <ChipPanel />
      </div>
    </main>
  );
}

const tools = [
  {
    name: '交易',
    icon: (
      <>
        <path d="M12 3.500A17.500 17.500 0 0 1 36.500 26M36.500 26.500v4l5.500-3.500M28 36.500A17.500 17.500 0 0 1 5 11M5 12V8l-4.500 3.500" />
        <path d="M14 11l6.500 8.500L27 11M13.500 20.500h14M13.500 26h14M20.500 20v11" />
      </>
    ),
  },
  {
    name: '发帖',
    icon: (
      <>
        <path d="M29 3H7Q3 3 3 7v26q0 4 4 4h26q4 0 4-4V13" />
        <path d="M15 26l2-6L31 8l3 3-13 12zM33 5l3-2 2 2-2 3z" fill="#606266" strokeWidth="1" />
      </>
    ),
  },
  {
    name: '功能',
    icon: (
      <>
        <rect x="4" y="4" width="14" height="14" rx="2.500" />
        <rect x="4" y="22" width="14" height="14" rx="2.500" />
        <rect x="22" y="22" width="14" height="14" rx="2.500" />
        <path d="M28 3.500q1-1 2 0l7 6.500q1 1 0 2l-7 6.500q-1 1-2 0l-7-6.500q-1-1 0-2z" />
      </>
    ),
  },
  {
    name: '设自选',
    icon: (
      <>
        <circle cx="20" cy="20" r="17.500" />
        <path d="M11 20h3.500M18.300 20h3.500M25.500 20h3.500" strokeWidth="3.500" />
      </>
    ),
  },
];

function BottomBar() {
  return (
    <footer className="flex h-[162px] flex-col justify-between border-t-2 border-[#dcdde2] bg-[#f6f8fa] pb-4">
      <div className="flex">
        <a href="#index" className="flex w-[175px] flex-col items-center pt-2 text-2xl leading-[34px] text-[#f71f22]">
          <svg viewBox="0 0 14 7" className="mb-[5px] h-[7px] w-3.5">
            <path d="M7 0l7 7H0z" fill="#606266" />
          </svg>
          <span>3632.98</span>
          <span className="pl-4">
            <span className="mr-3 text-[#606266]">上证</span>0.64%
          </span>
        </a>
        {tools.map((t) => (
          <button key={t.name} className="flex flex-1 flex-col items-center pt-2 text-[22px] leading-[34px] text-[#606266]">
            <svg viewBox="0 0 42 40" className="mb-[3px] h-10 w-[42px]" fill="none" stroke="#606266" strokeWidth="2">
              {t.icon}
            </svg>
            {t.name}
          </button>
        ))}
      </div>
      <span className="h-2.5 w-[273px] self-center rounded-full bg-black" />
    </footer>
  );
}

export default function App() {
  return (
    <div className="relative bg-white font-['Inter','Noto_Sans_CJK_SC',sans-serif]">
      <StatusBar />
      <Header />
      <Summary />
      <MoneyFlow />
      <Tabs />
      <Charts />
      <BottomBar />
      <svg viewBox="0 0 769 1665" className="pointer-events-none absolute left-0 top-0 w-full" fill="none" stroke="#e42408" strokeWidth="4" strokeLinecap="round">
        <path d="M453 697L690 361M644 387L690 361L682 414" />
      </svg>
    </div>
  );
}
